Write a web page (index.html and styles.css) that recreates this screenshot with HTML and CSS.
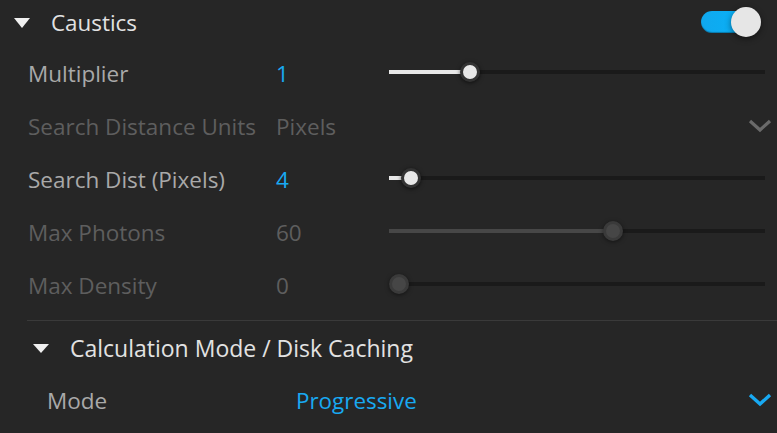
FILE: index.html
```html
<!DOCTYPE html>
<html>
<head>
<meta charset="utf-8">
<link rel="stylesheet" href="styles.css">
</head>
<body>
<div class="panel">
  <div class="header">
    <span class="tri"></span>
    <span class="title">Caustics</span>
    <span class="toggle"><span class="knob"></span></span>
  </div>

  <div class="row">
    <span class="label">Multiplier</span>
    <span class="value">1</span>
    <div class="slider">
      <div class="track"><div class="fill" style="width:81px"></div></div>
      <span class="thumb" style="left:81px"></span>
    </div>
  </div>

  <div class="row disabled">
    <span class="label">Search Distance Units</span>
    <span class="value">Pixels</span>
    <div class="dropdown">
      <svg class="chev" width="24" height="14" viewBox="0 0 24 14"><path d="M2 2 L12 11 L22 2" fill="none" stroke="currentColor" stroke-width="3.2"/></svg>
    </div>
  </div>

  <div class="row">
    <span class="label">Search Dist (Pixels)</span>
    <span class="value">4</span>
    <div class="slider">
      <div class="track"><div class="fill" style="width:22px"></div></div>
      <span class="thumb" style="left:22px"></span>
    </div>
  </div>

  <div class="row disabled">
    <span class="label">Max Photons</span>
    <span class="value">60</span>
    <div class="slider">
      <div class="track"><div class="fill" style="width:224px"></div></div>
      <span class="thumb" style="left:224px"></span>
    </div>
  </div>

  <div class="row disabled">
    <span class="label">Max Density</span>
    <span class="value">0</span>
    <div class="slider">
      <div class="track"><div class="fill" style="width:0px"></div></div>
      <span class="thumb" style="left:10px"></span>
    </div>
  </div>

  <div class="sub">
    <div class="divider"></div>
    <div class="subheader">
      <span class="tri small"></span>
      <span class="subtitle">Calculation Mode / Disk Caching</span>
    </div>
    <div class="row mode">
      <span class="label">Mode</span>
      <span class="value">Progressive</span>
      <div class="dropdown active">
        <svg class="chev" width="24" height="14" viewBox="0 0 24 14"><path d="M2 2 L12 11 L22 2" fill="none" stroke="currentColor" stroke-width="3.4"/></svg>
      </div>
    </div>
  </div>
</div>
</body>
</html>
```

FILE: styles.css
```css
html, body {
  margin: 0;
  padding: 0;
  background: #262626;
}
body {
  font-family: "Open Sans", "Noto Sans", sans-serif;
  width: 777px;
  height: 433px;
  overflow: hidden;
}
.panel {
  display: flex;
  flex-direction: column;
}
.header {
  height: 47px;
  display: flex;
  align-items: center;
  padding-left: 14px;
  padding-right: 16px;
}
.tri {
  width: 0;
  height: 0;
  border-left: 8px solid transparent;
  border-right: 8px solid transparent;
  border-top: 10px solid #f0f0f0;
  margin-right: 21px;
  margin-top: -2px;
}
.title {
  font-size: 22.4px;
  color: #e2e2e2;
  flex: 1;
  margin-top: -2px;
}
.toggle {
  position: relative;
  width: 48px;
  height: 22px;
  border-radius: 11px;
  background: linear-gradient(90deg, #10a8ee, #08b2f8);
  margin-right: 12px;
  margin-top: -3px;
  box-shadow: inset 0 -1px 1px rgba(0,0,0,0.3);
}
.toggle .knob {
  position: absolute;
  width: 30px;
  height: 30px;
  border-radius: 50%;
  background: #e6e6e6;
  right: -12px;
  top: -4px;
  box-shadow: 0 2px 6px rgba(0,0,0,0.45);
}
.row {
  height: 53px;
  display: flex;
  align-items: center;
  padding-left: 28px;
  padding-right: 12px;
}
.label {
  width: 248px;
  font-size: 22.5px;
  color: #a9a9a9;
  white-space: nowrap;
}
.value {
  width: 113px;
  font-size: 22.5px;
  color: #18a9f2;
}
.slider {
  position: relative;
  flex: 1;
  height: 20px;
  display: flex;
  align-items: center;
  margin-top: -3px;
}
.track {
  width: 100%;
  height: 4px;
  background: #1a1a1a;
  display: flex;
}
.fill {
  height: 4px;
  background: #e8e8e8;
}
.thumb {
  position: absolute;
  top: 0;
  width: 14px;
  height: 14px;
  margin-left: -10px;
  border-radius: 50%;
  background: #e8e8e8;
  border: 3px solid #333;
  box-shadow: 0 1px 4px rgba(0,0,0,0.6);
}
.disabled .label,
.disabled .value {
  color: #5e5e5e;
}
.disabled .fill {
  background: #474747;
}
.disabled .thumb {
  background: #464646;
  border-color: #3a3a3a;
  box-shadow: 0 1px 4px rgba(0,0,0,0.5);
}
.dropdown {
  flex: 1;
  display: flex;
  justify-content: flex-end;
  color: #6a6a6a;
  margin-right: -7px;
  margin-top: -1px;
}
.dropdown.active {
  color: #18a9f2;
}
.chev {
  display: block;
}
.sub {
  display: flex;
  flex-direction: column;
  padding-left: 27px;
  margin-top: 8px;
}
.divider {
  height: 1px;
  background: #3a3a3a;
}
.subheader {
  height: 54px;
  display: flex;
  align-items: center;
  padding-left: 6px;
}
.tri.small {
  border-left-width: 8px;
  border-right-width: 8px;
  border-top-width: 9px;
  margin-right: 21px;
  margin-top: 0;
}
.subtitle {
  font-size: 23px;
  color: #e2e2e2;
}
.row.mode {
  padding-left: 20px;
  height: 50px;
}
.mode .label {
  width: 249px;
}
.mode .value {
  width: auto;
  font-size: 22.4px;
}
```
